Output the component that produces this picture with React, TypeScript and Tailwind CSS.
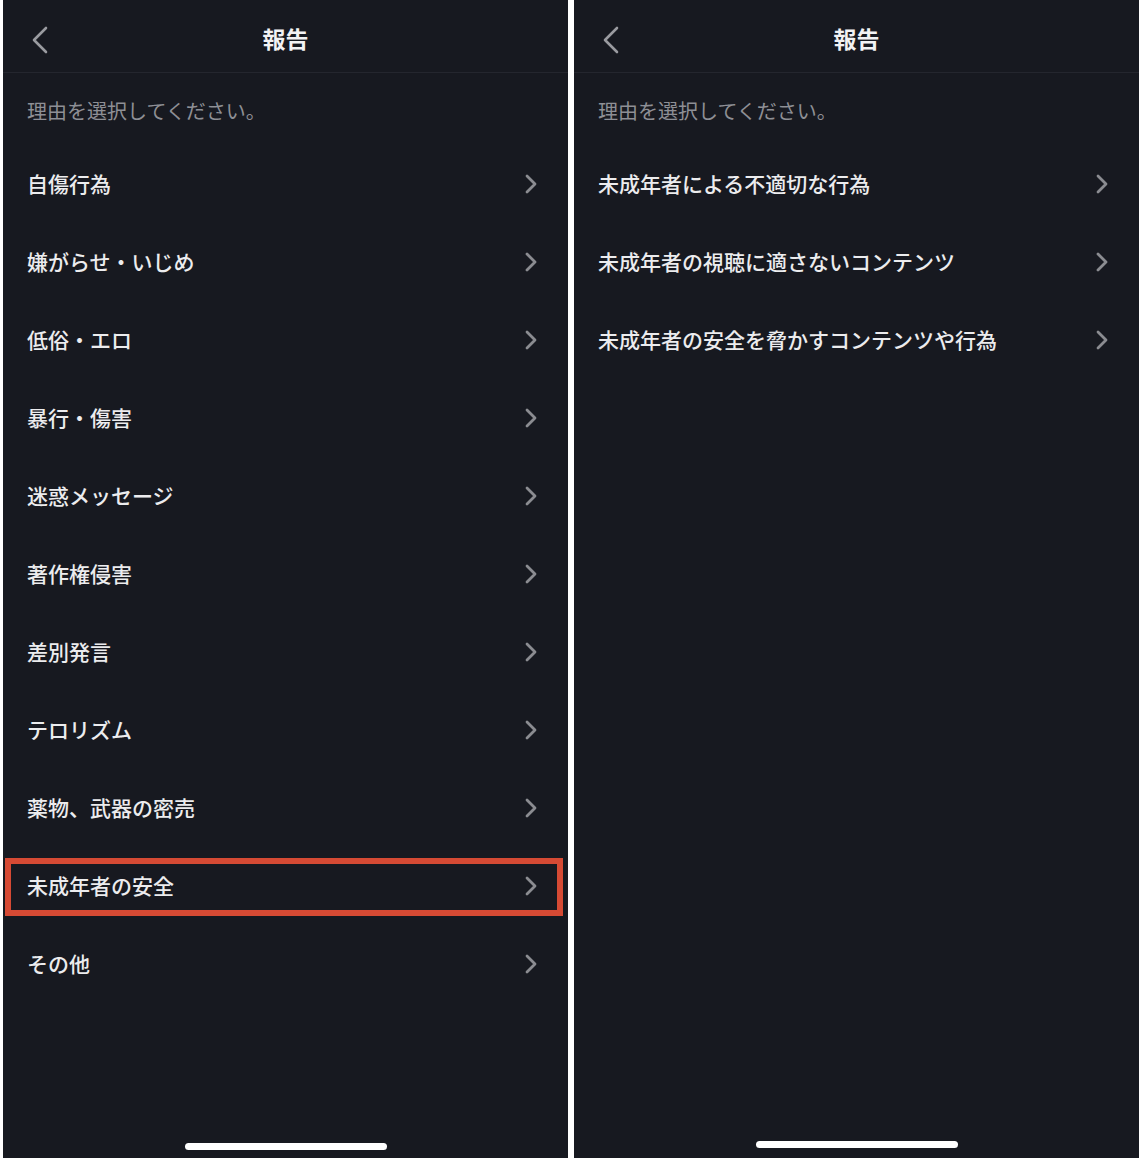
import { ReactNode } from 'react'

const leftItems = [
  '自傷行為',
  '嫌がらせ・いじめ',
  '低俗・エロ',
  '暴行・傷害',
  '迷惑メッセージ',
  '著作権侵害',
  '差別発言',
  'テロリズム',
  '薬物、武器の密売',
  '未成年者の安全',
  'その他',
]

const rightItems = [
  '未成年者による不適切な行為',
  '未成年者の視聴に適さないコンテンツ',
  '未成年者の安全を脅かすコンテンツや行為',
]

const ChevronRight = () => (
  <svg width="14" height="22" viewBox="0 0 14 22" fill="none">
    <path d="M3 3l8 8-8 8" stroke="#8b8c91" strokeWidth="2.8" strokeLinecap="round" strokeLinejoin="round" />
  </svg>
)

const ChevronLeft = () => (
  <svg width="18" height="28" viewBox="0 0 18 28" fill="none">
    <path d="M15 2L3 14l12 12" stroke="#9a9ba0" strokeWidth="2.6" strokeLinecap="round" strokeLinejoin="round" />
  </svg>
)

type RowProps = {
  label: string
  highlighted?: boolean
}

const Row = ({ label, highlighted }: RowProps) => (
  <div className="relative flex h-[78px] items-center justify-between pl-6 pr-[30px]">
    <span className="text-[21px] font-medium text-[#ececee]">{label}</span>
    <ChevronRight />
    {highlighted && (
      <div className="pointer-events-none absolute top-[11px] bottom-[9px] left-[2px] right-[5px] border-[6px] border-[#d64a34]" />
    )}
  </div>
)

type PanelProps = {
  children: ReactNode
  barOffset: string
}

const Panel = ({ children, barOffset }: PanelProps) => (
  <div className="flex h-full w-[565px] flex-col bg-[#171920]">
    <div className="relative flex h-[73px] shrink-0 items-center justify-center border-b border-[#24262e] pt-[5px]">
      <div className="absolute left-[28px] top-[26px]">
        <ChevronLeft />
      </div>
      <h1 className="text-[23px] font-bold text-[#f2f2f4]">報告</h1>
    </div>
    <div className="flex h-[72px] shrink-0 items-center pl-6 pt-[4px] text-[20px] text-[#8e8f95]">
      理由を選択してください。
    </div>
    <div className="flex-1">{children}</div>
    <div className={`flex justify-center ${barOffset}`}>
      <div className="h-[7px] w-[202px] rounded-full bg-white" />
    </div>
  </div>
)

export default function App() {
  return (
    <div
      className="flex h-[1158px] w-[1140px] bg-white pl-[3px] pr-[1px]"
      style={{ fontFamily: '"Noto Sans CJK JP", "Noto Sans", sans-serif' }}
    >
      <Panel barOffset="pb-[8px]">
        {leftItems.map((item, i) => (
          <Row key={item} label={item} highlighted={i === 9} />
        ))}
      </Panel>
      <div className="w-[6px]" />
      <Panel barOffset="pb-[10px]">
        {rightItems.map((item) => (
          <Row key={item} label={item} />
        ))}
      </Panel>
    </div>
  )
}
